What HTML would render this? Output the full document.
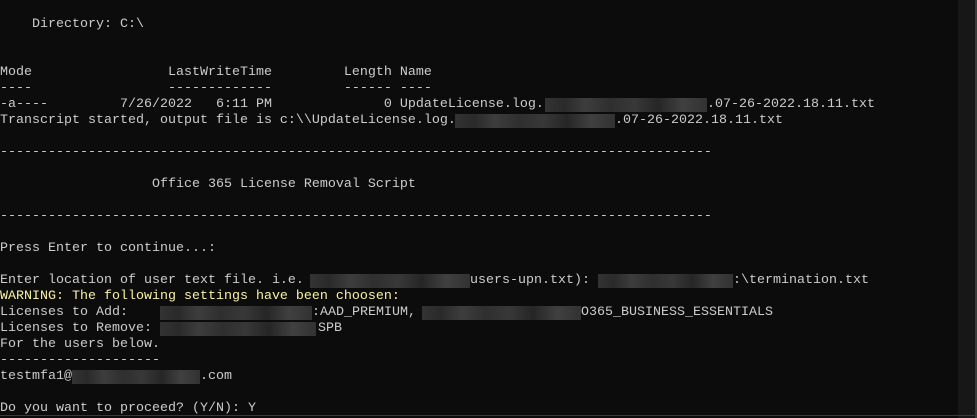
<!DOCTYPE html>
<html><head><meta charset="utf-8"><style>
html,body{margin:0;padding:0;}
body{width:977px;height:418px;background:#0c0c0c;position:relative;overflow:hidden;font-family:"Liberation Mono",monospace;font-size:13.33px;color:#cccccc;}
.l{position:absolute;white-space:pre;line-height:16px;height:16px;margin-top:1px;}
.y{color:#f9f1a5;}
.b{position:absolute;height:14px;background:linear-gradient(90deg,#333 0,#2a2a2a 12%,#3d3d3d 25%,#2f2f2f 40%,#383838 55%,#262626 70%,#404040 85%,#323232 100%);}
.sb{position:absolute;left:958px;top:0;width:17px;height:418px;background:#171717;}
.bd{position:absolute;left:975px;top:0;width:2px;height:418px;background:#3a3a3a;}
.bt{position:absolute;left:0;top:415px;width:975px;height:1px;background:#3a3a3a;}
</style></head><body>
<div class="l" style="left:0;top:16px">    Directory: C:\</div>
<div class="l" style="left:0;top:64px">Mode                 LastWriteTime         Length Name</div>
<div class="l" style="left:0;top:80px">----                 -------------         ------ ----</div>
<div class="l" style="left:0;top:96px">-a----         7/26/2022   6:11 PM              0 UpdateLicense.log.</div>
<div class="b" style="left:545px;top:98px;width:162px"></div>
<div class="l" style="left:707px;top:96px">.07-26-2022.18.11.txt</div>
<div class="l" style="left:0;top:112px">Transcript started, output file is c:\\UpdateLicense.log.</div>
<div class="b" style="left:455px;top:114px;width:160px"></div>
<div class="l" style="left:615px;top:112px">.07-26-2022.18.11.txt</div>
<div class="l" style="left:0;top:144px">-----------------------------------------------------------------------------------------</div>
<div class="l" style="left:0;top:176px">                   Office 365 License Removal Script</div>
<div class="l" style="left:0;top:208px">-----------------------------------------------------------------------------------------</div>
<div class="l" style="left:0;top:240px">Press Enter to continue...:</div>
<div class="l" style="left:0;top:272px">Enter location of user text file. i.e. </div>
<div class="b" style="left:310px;top:274px;width:160px"></div>
<div class="l" style="left:470px;top:272px">users-upn.txt): </div>
<div class="b" style="left:598px;top:274px;width:135px"></div>
<div class="l" style="left:733px;top:272px">:\termination.txt</div>
<div class="l y" style="left:0;top:288px">WARNING: The following settings have been choosen:</div>
<div class="l" style="left:0;top:304px">Licenses to Add:    </div>
<div class="b" style="left:160px;top:306px;width:152px"></div>
<div class="l" style="left:312px;top:304px">:AAD_PREMIUM, </div>
<div class="b" style="left:422px;top:306px;width:159px"></div>
<div class="l" style="left:581px;top:304px">O365_BUSINESS_ESSENTIALS</div>
<div class="l" style="left:0;top:320px">Licenses to Remove: </div>
<div class="b" style="left:160px;top:322px;width:156px"></div>
<div class="l" style="left:318px;top:320px">SPB</div>
<div class="l" style="left:0;top:336px">For the users below.</div>
<div class="l" style="left:0;top:352px">--------------------</div>
<div class="l" style="left:0;top:368px">testmfa1@</div>
<div class="b" style="left:72px;top:370px;width:128px"></div>
<div class="l" style="left:200px;top:368px">.com</div>
<div class="l" style="left:0;top:400px">Do you want to proceed? (Y/N): Y</div>
<div class="sb"></div><div class="bd"></div><div class="bt"></div>
</body></html>
